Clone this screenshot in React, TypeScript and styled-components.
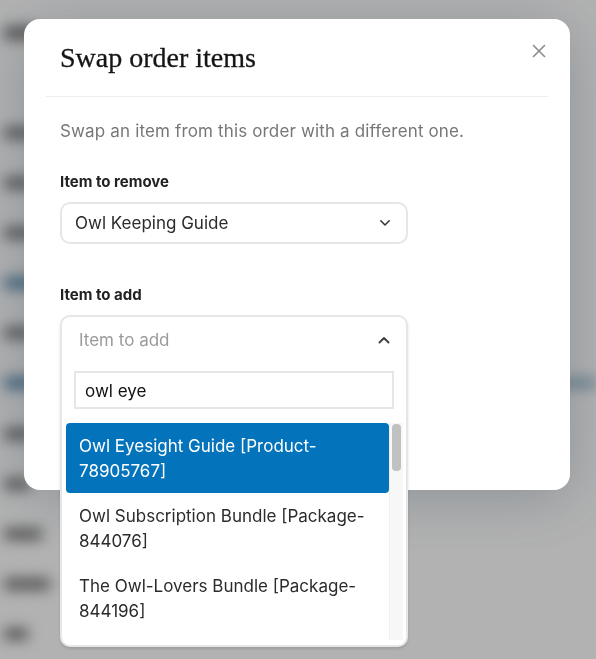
import React from 'react';
import styled, { createGlobalStyle } from 'styled-components';

const GlobalStyle = createGlobalStyle`
  html, body { margin: 0; padding: 0; }
  body {
    font-family: Inter, "Noto Sans", sans-serif;
    background: #ffffff;
    overflow: hidden;
  }
  * { box-sizing: border-box; }
`;

/* ---------- blurred page behind the dialog ---------- */
const Page = styled.div`
  width: 596px;
  height: 659px;
  filter: blur(7px);
  display: flex;
  flex-direction: column;
  padding: 26px 0 0 4px;
`;

const PageHeading = styled.div`
  width: 36px;
  height: 14px;
  border-radius: 3px;
  background: #7a7a7a;
  margin-bottom: 68px;
`;

const PageRow = styled.div`
  height: 50.5px;
  display: flex;
  align-items: center;
  justify-content: space-between;
`;

const RowText = styled.div<{ $w: number; $link?: boolean }>`
  width: ${(p) => p.$w}px;
  height: 12px;
  border-radius: 3px;
  background: ${(p) => (p.$link ? '#5b8db0' : '#7a7a7a')};
`;

const RowAccent = styled.div`
  width: 40px;
  height: 8px;
  background: #5b8db0;
  opacity: 0.8;
`;

/* ---------- dialog overlay ---------- */
const Overlay = styled.div`
  position: fixed;
  inset: 0;
  background: rgba(0, 0, 0, 0.3);
  padding: 19px 0 0 24px;
`;

const Modal = styled.div`
  width: 546px;
  height: 471px;
  background: #ffffff;
  border-radius: 16px;
  box-shadow: 0 8px 60px rgba(40, 60, 80, 0.28);
  display: flex;
  flex-direction: column;
`;

const Header = styled.div`
  margin: 0 22px;
  padding: 22px 14px 21px 14px;
  border-bottom: 1px solid #eeeeee;
  display: flex;
  justify-content: space-between;
  align-items: flex-start;
`;

const Title = styled.h2`
  margin: 0;
  font-family: "Liberation Serif", "Times New Roman", serif;
  font-weight: 400;
  font-size: 28px;
  line-height: 34px;
  color: #151515;
  -webkit-text-stroke: 0.3px #151515;
`;

const CloseButton = styled.button`
  border: none;
  background: transparent;
  padding: 0;
  margin: 2px -13px 0 0;
  width: 16px;
  height: 16px;
  display: flex;
  align-items: center;
  justify-content: center;
  color: #8a8a8a;
  cursor: pointer;
`;

const Body = styled.div`
  padding: 22px 36px 0 36px;
  display: flex;
  flex-direction: column;
`;

const Description = styled.p`
  margin: 0 0 29px 0;
  font-size: 17px;
  letter-spacing: 0.15px;
  line-height: 24px;
  color: #777777;
`;

const Field = styled.div<{ $gap?: number }>`
  display: flex;
  flex-direction: column;
  gap: 10px;
  margin-bottom: ${(p) => p.$gap ?? 0}px;
`;

const Label = styled.label`
  font-size: 15px;
  font-weight: 700;
  line-height: 20px;
  color: #222222;
`;

const SelectBox = styled.div`
  width: 348px;
  height: 42px;
  border: 2px solid #e6e6e6;
  border-radius: 10px;
  display: flex;
  align-items: center;
  justify-content: space-between;
  padding: 0 15px 0 13px;
  font-size: 17px;
  color: #2b2b2b;
`;

const ComboAnchor = styled.div`
  position: relative;
  width: 348px;
  height: 42px;
`;

const ComboPanel = styled.div`
  position: absolute;
  top: 0;
  left: 0;
  width: 348px;
  height: 332px;
  background: #ffffff;
  border: 2px solid #e6e6e6;
  border-radius: 10px;
  box-shadow: 0 2px 3px rgba(0, 0, 0, 0.12);
  display: flex;
  flex-direction: column;
  z-index: 2;
`;

const ComboHead = styled.div`
  height: 48px;
  display: flex;
  align-items: center;
  justify-content: space-between;
  padding: 0 16px 2px 17px;
  font-size: 17px;
  color: #9a9a9a;
`;

const SearchInput = styled.input`
  margin: 6px 12px 0 12px;
  height: 38px;
  border: 2px solid #e6e6e6;
  border-radius: 0;
  padding: 2px 9px 0 9px;
  font-family: inherit;
  font-size: 17px;
  color: #111111;
  outline: none;
  caret-color: #000;
`;

const ListArea = styled.div`
  margin: 14px 3px 0 4px;
  height: 217px;
  display: flex;
  overflow: hidden;
`;

const Options = styled.ul`
  flex: 1;
  margin: 0;
  padding: 0;
  list-style: none;
  display: flex;
  flex-direction: column;
`;

const Option = styled.li<{ $active?: boolean }>`
  padding: 11px 13px 9px 13px;
  font-size: 17px;
  line-height: 25px;
  border-radius: 4px;
  color: ${(p) => (p.$active ? '#ffffff' : '#2b2b2b')};
  background: ${(p) => (p.$active ? '#0373bb' : 'transparent')};
`;

const ScrollTrack = styled.div`
  width: 14px;
  background: #f7f7f7;
  border-left: 1px solid #f0f0f0;
  padding: 1px 2px 0 2px;
`;

const ScrollThumb = styled.div`
  height: 47px;
  border-radius: 4px;
  background: #c1c1c1;
`;

const ChevronDown = () => (
  <svg width="12" height="8" viewBox="0 0 12 8" fill="none">
    <path d="M1.8 1.8 L6 6 L10.2 1.8" stroke="#333" strokeWidth="1.5" strokeLinecap="round" strokeLinejoin="round" />
  </svg>
);

const ChevronUp = () => (
  <svg width="12" height="8" viewBox="0 0 12 8" fill="none">
    <path d="M1.5 6.5 L6 2 L10.5 6.5" stroke="#444" strokeWidth="2" strokeLinecap="round" strokeLinejoin="round" />
  </svg>
);

const CloseIcon = () => (
  <svg width="14" height="14" viewBox="0 0 14 14" fill="none">
    <path d="M1.5 1.5 L12.5 12.5 M12.5 1.5 L1.5 12.5" stroke="currentColor" strokeWidth="1.6" strokeLinecap="round" />
  </svg>
);

const rows: { w: number; link?: boolean; accent?: boolean }[] = [
  { w: 34 },
  { w: 30 },
  { w: 32 },
  { w: 36, link: true },
  { w: 30 },
  { w: 36, link: true, accent: true },
  { w: 30 },
  { w: 26 },
  { w: 38 },
  { w: 46 },
  { w: 24 },
];

export default function App() {
  return (
    <>
      <GlobalStyle />
      <Page>
        <PageHeading />
        {rows.map((r, i) => (
          <PageRow key={i}>
            <RowText $w={r.w} $link={r.link} />
            {r.accent && <RowAccent />}
          </PageRow>
        ))}
      </Page>
      <Overlay>
        <Modal role="dialog" aria-label="Swap order items">
          <Header>
            <Title>Swap order items</Title>
            <CloseButton aria-label="Close">
              <CloseIcon />
            </CloseButton>
          </Header>
          <Body>
            <Description>Swap an item from this order with a different one.</Description>
            <Field $gap={41}>
              <Label>Item to remove</Label>
              <SelectBox>
                <span>Owl Keeping Guide</span>
                <ChevronDown />
              </SelectBox>
            </Field>
            <Field>
              <Label>Item to add</Label>
              <ComboAnchor>
                <ComboPanel>
                  <ComboHead>
                    <span>Item to add</span>
                    <ChevronUp />
                  </ComboHead>
                  <SearchInput defaultValue="owl eye" autoFocus />
                  <ListArea>
                    <Options>
                      <Option $active>Owl Eyesight Guide [Product-78905767]</Option>
                      <Option>Owl Subscription Bundle [Package-844076]</Option>
                      <Option>The Owl-Lovers Bundle [Package-844196]</Option>
                    </Options>
                    <ScrollTrack>
                      <ScrollThumb />
                    </ScrollTrack>
                  </ListArea>
                </ComboPanel>
              </ComboAnchor>
            </Field>
          </Body>
        </Modal>
      </Overlay>
    </>
  );
}
